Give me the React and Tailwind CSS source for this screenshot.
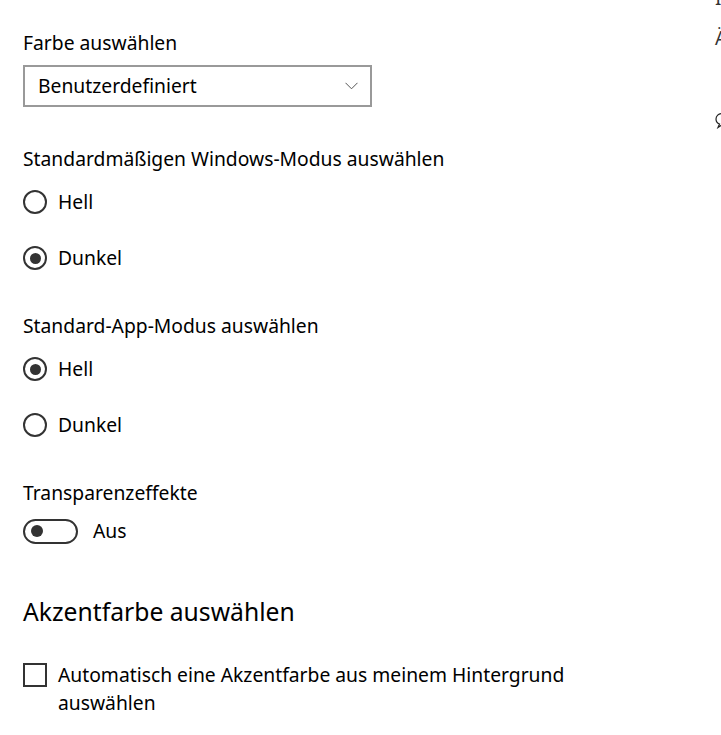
import React from 'react';

const font = { fontFamily: '"Noto Sans", "Open Sans", sans-serif' };

function Radio({ checked, label, className = '' }) {
    return (
        <div className={`flex items-center h-[40px] ${className}`}>
            <div className="w-[24px] h-[24px] rounded-full border-2 border-[#333] flex items-center justify-center shrink-0">
                {checked && <div className="w-[11px] h-[11px] rounded-full bg-[#333]" />}
            </div>
            <span className="ml-[11px] text-[19.3px] leading-[26px] text-black">{label}</span>
        </div>
    );
}

export default function App() {
    return (
        <div className="relative w-[721px] h-[735px] overflow-hidden bg-white" style={font}>
            <div className="pl-[23px] pt-[30px]">
                <div className="text-[19.3px] leading-[26px] text-black">Farbe auswählen</div>
                <div className="mt-[9px] w-[349px] h-[42px] border-2 border-[#999] flex items-center justify-between pl-[13px] pr-[12px]">
                    <span className="text-[19.3px] leading-[26px] text-black">Benutzerdefiniert</span>
                    <svg width="13" height="8" viewBox="0 0 13 8" fill="none">
                        <path d="M0.5 0.8 L6.5 6.8 L12.5 0.8" stroke="#555" strokeWidth="1" />
                    </svg>
                </div>

                <div className="mt-[39px] text-[19.3px] leading-[26px] text-black">Standardmäßigen Windows-Modus auswählen</div>
                <Radio className="mt-[10px]" label="Hell" />
                <Radio className="mt-[16px]" checked label="Dunkel" />

                <div className="mt-[35px] text-[19.3px] leading-[26px] text-black">Standard-App-Modus auswählen</div>
                <Radio className="mt-[10px]" checked label="Hell" />
                <Radio className="mt-[16px]" label="Dunkel" />

                <div className="mt-[35px] text-[19.3px] leading-[26px] text-black">Transparenzeffekte</div>
                <div className="mt-[5px] h-[40px] flex items-center">
                    <div className="w-[55px] h-[25px] rounded-full border-2 border-[#333] flex items-center pl-[6px] shrink-0">
                        <div className="w-[12px] h-[12px] rounded-full bg-[#333]" />
                    </div>
                    <span className="ml-[15px] text-[19.3px] leading-[26px] text-black">Aus</span>
                </div>

                <div className="mt-[44px] text-[24.7px] leading-[34px] text-black">Akzentfarbe auswählen</div>
                <div className="mt-[32px] flex items-start">
                    <div className="mt-[2px] w-[24px] h-[24px] border-2 border-[#333] shrink-0" />
                    <span className="ml-[11px] w-[560px] text-[19.3px] leading-[28px] text-black">
                        Automatisch eine Akzentfarbe aus meinem Hintergrund auswählen
                    </span>
                </div>
            </div>

            {/* clipped content of the neighbouring column */}
            <div className="absolute left-[715px] top-[-15px] text-[19px] leading-[26px] text-[#333]">
                <div>I</div>
                <div className="mt-[14px]">Ä</div>
            </div>
            <svg className="absolute left-[714px] top-[112px]" width="16" height="17" viewBox="0 0 16 17" fill="none">
                <path d="M8 1.5 C4.5 1.5 2 4 2 7 C2 9.5 3.5 11.3 5.5 12 L4 15.5 L8.5 12.5 C11.5 12.3 14 10 14 7 C14 4 11.5 1.5 8 1.5 Z" stroke="#222" strokeWidth="1.2" />
            </svg>
        </div>
    );
}
